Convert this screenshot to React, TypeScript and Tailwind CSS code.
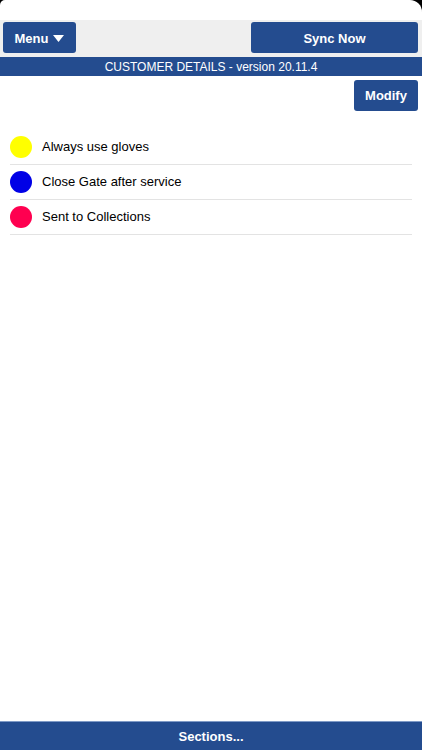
const notes = [
  { color: "bg-[#ffff00]", label: "Always use gloves" },
  { color: "bg-[#0000e6]", label: "Close Gate after service" },
  { color: "bg-[#ff0050]", label: "Sent to Collections" },
];

export default function App() {
  return (
    <div className="h-[750px] w-[422px] overflow-hidden bg-black font-['Liberation_Sans',Arial,sans-serif]">
      <div className="flex h-full flex-col overflow-hidden rounded-tl-[5px] rounded-tr-[12px] bg-white">
        <div className="h-[20px]" />

        {/* toolbar */}
        <div className="flex h-[37px] items-start justify-between bg-[#efefef] pl-[3px] pr-[4px] pt-[2px]">
          <button className="flex h-[31px] w-[73px] items-center justify-center gap-[5px] rounded-[3px] bg-[#244c8f] pt-[2px] text-[13px] font-bold text-white">
            Menu
            <svg width="11" height="7" viewBox="0 0 11 7">
              <path d="M0 0 H11 L5.5 7 Z" fill="white" />
            </svg>
          </button>
          <button className="h-[31px] w-[167px] rounded-[3px] bg-[#244c8f] pt-[2px] text-[13px] font-bold text-white">
            Sync Now
          </button>
        </div>

        {/* title band */}
        <div className="flex h-[19px] items-center justify-center bg-[#244c8f] text-[12px] text-white">
          CUSTOMER DETAILS - version 20.11.4
        </div>

        <div className="flex justify-end pr-[4px] pt-[4px]">
          <button className="h-[31px] w-[64px] rounded-[3px] bg-[#244c8f] pt-[1px] text-[13px] font-bold text-white">
            Modify
          </button>
        </div>

        {/* notes */}
        <ul className="mx-[10px] mt-[19px]">
          {notes.map((n) => (
            <li key={n.label} className="flex h-[35px] items-center gap-[10px] border-b border-[#e3e3e3]">
              <span className={`h-[22px] w-[22px] rounded-full ${n.color}`} />
              <span className="text-[13px] text-black">{n.label}</span>
            </li>
          ))}
        </ul>

        <div className="flex-1" />

        <div className="flex h-[29px] items-center justify-center border-t border-[#7f9ac6] bg-[#244c8f] pt-[1px] text-[13px] font-bold text-white">
          Sections...
        </div>
      </div>
    </div>
  );
}
